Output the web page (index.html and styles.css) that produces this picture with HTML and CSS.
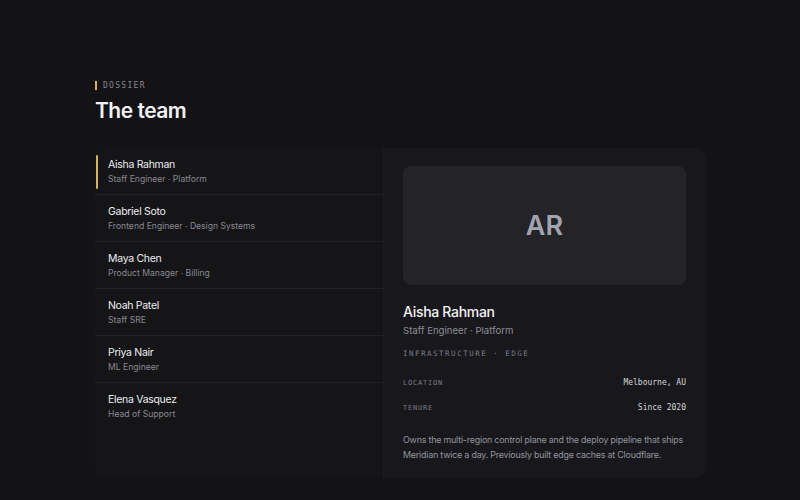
FILE: index.html
```html
<!DOCTYPE html>
<html lang="en">
<head>
    <meta charset="UTF-8">
    <meta name="viewport" content="width=device-width, initial-scale=1.0">
    <title>The team</title>
    <link rel="stylesheet" href="styles.css">
</head>
<body>
    <div class="page">
        <div class="eyebrow">DOSSIER</div>
        <h1>The team</h1>

        <div class="card">
            <ul class="people">
                <li class="person active">
                    <div class="name">Aisha Rahman</div>
                    <div class="role">Staff Engineer · Platform</div>
                </li>
                <li class="person">
                    <div class="name">Gabriel Soto</div>
                    <div class="role">Frontend Engineer · Design Systems</div>
                </li>
                <li class="person">
                    <div class="name">Maya Chen</div>
                    <div class="role">Product Manager · Billing</div>
                </li>
                <li class="person">
                    <div class="name">Noah Patel</div>
                    <div class="role">Staff SRE</div>
                </li>
                <li class="person">
                    <div class="name">Priya Nair</div>
                    <div class="role">ML Engineer</div>
                </li>
                <li class="person last">
                    <div class="name">Elena Vasquez</div>
                    <div class="role">Head of Support</div>
                </li>
            </ul>

            <div class="detail">
                <div class="avatar">AR</div>
                <h2>Aisha Rahman</h2>
                <div class="detail-role">Staff Engineer · Platform</div>
                <div class="tags">INFRASTRUCTURE · EDGE</div>
                <div class="facts">
                    <div class="fact">
                        <span class="label">LOCATION</span>
                        <span class="value">Melbourne, AU</span>
                    </div>
                    <div class="fact">
                        <span class="label">TENURE</span>
                        <span class="value">Since 2020</span>
                    </div>
                </div>
                <p class="bio">Owns the multi-region control plane and the deploy pipeline that ships Meridian twice a day. Previously built edge caches at Cloudflare.</p>
            </div>
        </div>
    </div>
</body>
</html>
```

FILE: styles.css
```css
body {
    margin: 0;
    background-color: #131316;
    font-family: Inter, "Noto Sans", sans-serif;
    color: #ececef;
}
.page {
    padding: 80px 94px 0 95px;
}
.eyebrow {
    font-family: "DejaVu Sans Mono", monospace;
    font-size: 8px;
    letter-spacing: 1.3px;
    color: #85858d;
    border-left: 2px solid #d8b15a;
    padding-left: 6px;
    line-height: 9px;
    margin-top: 1px;
}
h1 {
    margin: 6px 0 0 0;
    font-size: 21px;
    font-weight: 600;
    letter-spacing: -0.5px;
    line-height: 30px;
    color: #f2f2f4;
}
.card {
    margin-top: 22px;
    width: 611px;
    height: 330px;
    display: flex;
    background-color: #151518;
    border-radius: 12px;
    overflow: hidden;
}
.people {
    list-style: none;
    margin: 0;
    padding: 0;
    width: 288px;
    border-right: 1px solid #1c1c20;
}
.person {
    height: 47px;
    padding: 9px 0 0 13px;
    box-sizing: border-box;
    border-bottom: 1px solid #222226;
    position: relative;
}
.person.last {
    border-bottom: none;
}
.person.active::before {
    content: "";
    position: absolute;
    left: 1px;
    top: 7px;
    bottom: 5px;
    width: 2px;
    border-radius: 1px;
    background-color: #d8b15a;
}
.name {
    font-size: 10.5px;
    letter-spacing: -0.3px;
    line-height: 15px;
    color: #ececef;
}
.role {
    margin-top: 1px;
    font-size: 8.6px;
    line-height: 13px;
    color: #88888f;
}
.detail {
    flex: 1;
    background-color: #18181c;
    padding: 18px 20px 0 19px;
}
.avatar {
    height: 119px;
    background-color: #232328;
    border-radius: 8px;
    display: flex;
    align-items: center;
    justify-content: center;
    font-size: 27px;
    font-weight: 600;
    color: #a3a3ad;
}
h2 {
    margin: 17px 0 0 0;
    font-size: 14px;
    font-weight: 500;
    letter-spacing: -0.3px;
    line-height: 20px;
    color: #f2f2f4;
}
.detail-role {
    margin-top: 1px;
    font-size: 9.6px;
    line-height: 15px;
    color: #8c8c95;
}
.tags {
    margin-top: 10px;
    font-family: "DejaVu Sans Mono", monospace;
    font-size: 7.5px;
    letter-spacing: 1.5px;
    line-height: 12px;
    color: #7a7a83;
}
.facts {
    margin-top: 10px;
}
.fact {
    display: flex;
    justify-content: space-between;
    align-items: center;
    height: 25px;
    font-family: "DejaVu Sans Mono", monospace;
}
.label {
    font-size: 7px;
    letter-spacing: 0.8px;
    color: #7a7a83;
}
.value {
    font-size: 8px;
    color: #d6d6da;
}
.bio {
    margin: 12px -6px 0 0;
    font-size: 8.9px;
    letter-spacing: -0.2px;
    line-height: 15px;
    color: #94949c;
}
```
